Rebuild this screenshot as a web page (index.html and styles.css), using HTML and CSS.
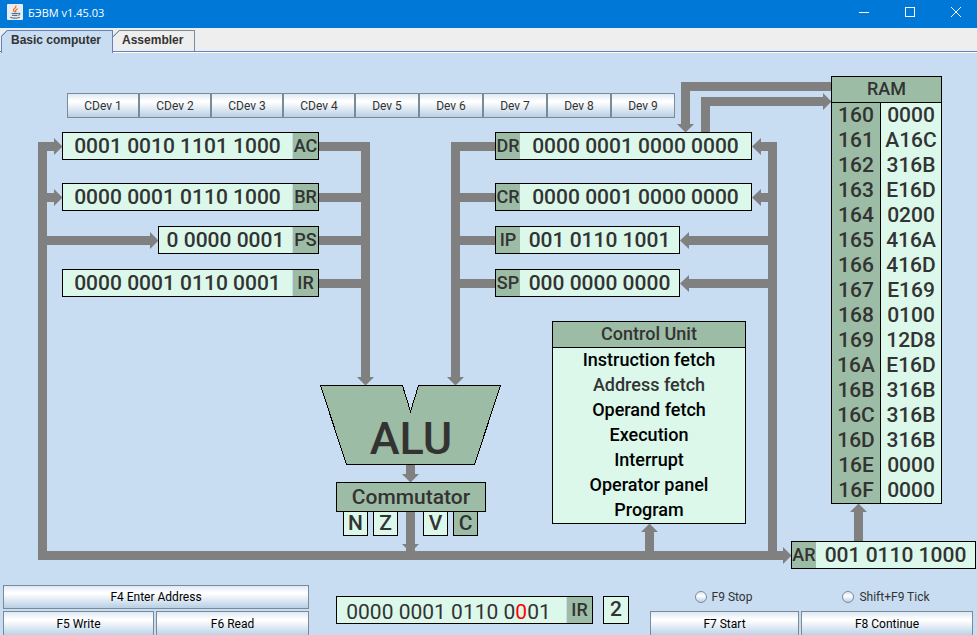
FILE: index.html
```html
<!DOCTYPE html>
<html lang="en">
<head>
<meta charset="utf-8">
<title>БЭВМ v1.45.03</title>
<link rel="stylesheet" href="styles.css">
</head>
<body>
<div class="window">
  <header class="titlebar">
    <svg class="app-icon" width="16" height="16" viewBox="0 0 16 16" aria-hidden="true">
      <rect width="16" height="16" rx="1" fill="#e9edf0"/>
      <path d="M8.2 8.3C5 6.4 6.800 5 8.300 3.800 9.200 3 9 2.200 8.800 1.500M9.300 8.500C7.600 6.900 8.700 6.100 10.600 4.800" fill="none" stroke="#e8762c" stroke-width="1.200"/>
      <path d="M4.500 9.500h6.800M5 11.400h5.500M11.300 9.300c2.200-.5 2 1.600-.2 2M3.200 13.200c2.500 1 7 1 9.600 0" fill="none" stroke="#4e7896" stroke-width="1.100"/>
    </svg>
    <span class="title">БЭВМ v1.45.03</span>
    <div class="window-controls">
      <button type="button" aria-label="Minimize"><svg width="10" height="10" viewBox="0 0 10 10"><path d="M0 5.500h10"/></svg></button>
      <button type="button" aria-label="Maximize"><svg width="10" height="10" viewBox="0 0 10 10"><rect x=".5" y=".5" width="9" height="9"/></svg></button>
      <button type="button" aria-label="Close"><svg width="10" height="10" viewBox="0 0 10 10"><path d="M0 0l10 10M10 0L0 10"/></svg></button>
    </div>
  </header>

  <nav class="tabs">
    <button type="button" class="tab selected">Basic computer</button>
    <button type="button" class="tab">Assembler</button>
  </nav>

  <main class="canvas">
    <svg class="wires" width="977" height="529" viewBox="0 53 977 529" aria-hidden="true">
      <g class="lines">
        <path d="M54 146.500H42.500V555.500H783M42.500 197.500H54M42.500 240.500H150"/>
        <path d="M319 146.500H365.500V377M319 197.500H365.500M319 240.500H365.500M319 283.500H365.500"/>
        <path d="M495 146.500H455.500V377M495 197.500H455.500M495 240.500H455.500M495 283.500H455.500"/>
        <path d="M761 146.500H772.500V555.500M761 197.500H772.500M689 240.500H772.500M689 283.500H772.500"/>
        <path d="M831 86.500H685.500V125M705.500 132V101.500H824"/>
        <path d="M410.500 464V475M410.500 511V551M649.500 551V531M858.500 541V511"/>
      </g>
      <g class="heads">
        <path d="M54 138v17l8.500-8.500zM54 189v17l8.500-8.500zM150 232v17l8.500-8.500zM783 547v17l8.500-8.500zM823 93v17l8.500-8.500z"/>
        <path d="M761 138v17l-9-8.500zM761 189v17l-9-8.500zM689 232v17l-9-8.500zM689 275v17l-9-8.500z"/>
        <path d="M357 377h17l-8.500 8.500zM447 377h17l-8.500 8.500zM677 124h17l-8.500 8.500zM402 474h17l-8.500 8.500zM402 544h17l-8.500 8.500z"/>
        <path d="M641 532h17l-8.500-8.500zM850 512h17l-8.500-8.500z"/>
      </g>
      <path class="alu-shape" shape-rendering="crispEdges" d="M320.500 385.500H402.500L410.500 411.500 418.500 385.500H500.500L474.500 464.500H346.500z"/>
      <text class="alu-text" x="411" y="454" text-anchor="middle">ALU</text>
    </svg>

    <div class="devices">
      <button type="button" class="control">CDev 1</button><button type="button" class="control">CDev 2</button><button type="button" class="control">CDev 3</button><button type="button" class="control">CDev 4</button><button type="button" class="control narrow">Dev 5</button><button type="button" class="control narrow">Dev 6</button><button type="button" class="control narrow">Dev 7</button><button type="button" class="control narrow">Dev 8</button><button type="button" class="control narrow">Dev 9</button>
    </div>

    <div class="register node ac"><span class="value">0001 0010 1101 1000</span><span class="name">AC</span></div>
    <div class="register node br"><span class="value">0000 0001 0110 1000</span><span class="name">BR</span></div>
    <div class="register short node ps"><span class="value">0 0000 0001</span><span class="name">PS</span></div>
    <div class="register node ir"><span class="value">0000 0001 0110 0001</span><span class="name">IR</span></div>

    <div class="register right node dr"><span class="name">DR</span><span class="value">0000 0001 0000 0000</span></div>
    <div class="register right node cr"><span class="name">CR</span><span class="value">0000 0001 0000 0000</span></div>
    <div class="register right medium node ip"><span class="name">IP</span><span class="value">001 0110 1001</span></div>
    <div class="register right medium node sp"><span class="name">SP</span><span class="value">000 0000 0000</span></div>
    <div class="register right medium node ar"><span class="name">AR</span><span class="value">001 0110 1000</span></div>

    <div class="commutator node">Commutator</div>
    <div class="flag node n">N</div>
    <div class="flag node z">Z</div>
    <div class="flag node v">V</div>
    <div class="flag set node c">C</div>

    <section class="control-unit node">
      <h2>Control Unit</h2>
      <ul>
        <li>Instruction fetch</li>
        <li class="current">Address fetch</li>
        <li>Operand fetch</li>
        <li>Execution</li>
        <li>Interrupt</li>
        <li>Operator panel</li>
        <li>Program</li>
      </ul>
    </section>

    <table class="ram node">
      <thead><tr><th colspan="2">RAM</th></tr></thead>
      <tbody>
        <tr><th>160</th><td>0000</td></tr>
        <tr><th>161</th><td>A16C</td></tr>
        <tr><th>162</th><td>316B</td></tr>
        <tr><th>163</th><td>E16D</td></tr>
        <tr><th>164</th><td>0200</td></tr>
        <tr><th>165</th><td>416A</td></tr>
        <tr><th>166</th><td>416D</td></tr>
        <tr><th>167</th><td>E169</td></tr>
        <tr><th>168</th><td>0100</td></tr>
        <tr><th>169</th><td>12D8</td></tr>
        <tr><th>16A</th><td>E16D</td></tr>
        <tr><th>16B</th><td>316B</td></tr>
        <tr><th>16C</th><td>316B</td></tr>
        <tr><th>16D</th><td>316B</td></tr>
        <tr><th>16E</th><td>0000</td></tr>
        <tr><th>16F</th><td>0000</td></tr>
      </tbody>
    </table>
  </main>

  <footer class="operator">
    <div class="entry">
      <button type="button" class="control wide">F4 Enter Address</button>
      <button type="button" class="control tall">F5 Write</button>
      <button type="button" class="control tall">F6 Read</button>
    </div>
    <div class="input-panel">
      <div class="register input"><span class="value">0000 0001 0110 0<span class="cursor">0</span>01</span><span class="name">IR</span></div>
      <div class="digit">2</div>
    </div>
    <div class="run">
      <label class="option"><input type="radio" name="stop">F9 Stop</label>
      <label class="option"><input type="radio" name="tick">Shift+F9 Tick</label>
      <button type="button" class="control tall">F7 Start</button>
      <button type="button" class="control tall">F8 Continue</button>
    </div>
  </footer>
</div>
</body>
</html>
```
FILE: styles.css
```css
:root {
  --page: #c8ddf2;
  --green: #9dbca5;
  --mint: #dbf8eb;
  --text: #333;
  --edge: #7a8a99;
  --accent: #6382bf;
}

* { box-sizing: border-box; }

body {
  margin: 0;
  overflow: hidden;
  background: var(--page);
  color: var(--text);
  font-family: Roboto, sans-serif;
}

button { font: inherit; color: inherit; margin: 0; padding: 0; }

.window { min-height: 100vh; }

.titlebar {
  display: flex;
  align-items: center;
  height: 28px;
  padding: 0 16px 4px 7px;
  background: #0078d7;
  color: #fff;
  font: 11px/16px "Open Sans", sans-serif;
}

.title { margin-left: 5px; padding-top: 1px; }

.window-controls { display: flex; gap: 36px; margin-left: auto; }

.window-controls button {
  display: flex;
  border: 0;
  background: none;
}

.window-controls svg { fill: none; stroke: #fff; overflow: visible; }

.tabs {
  display: flex;
  height: 25px;
  padding: 2px 1px 0;
  background: linear-gradient(#eee 23px, var(--accent) 23px, var(--accent) 24px, #fff 24px);
}

.tab {
  height: 22px;
  padding: 0 11px 3px 9px;
  border: 1px solid var(--edge);
  border-left: 0;
  background: linear-gradient(135deg, #eee 4px, var(--edge) 4px, var(--edge) 5px, #eee 5px) border-box;
  border-bottom-color: var(--accent);
  font: bold 12px/18px "Liberation Sans", sans-serif;
  clip-path: polygon(6px 0, 100% 0, 100% 100%, 0 100%, 0 6px);
}

.tab.selected {
  height: 23px;
  padding-bottom: 4px;
  border: 1px solid var(--accent);
  border-bottom: 0;
  background: linear-gradient(135deg, #eee 4px, var(--accent) 4px, var(--accent) 5px, var(--page) 5px) border-box;
}

.canvas {
  position: relative;
  height: 529px;
}

.wires { position: absolute; top: 0; left: 0; }
.lines { fill: none; stroke: #808080; stroke-width: 9; }
.heads { fill: #808080; }
.alu-shape { fill: var(--green); stroke: #000; }
.alu-text { fill: var(--text); font-size: 45px; font-weight: 500; }

.devices {
  position: relative;
  display: flex;
  padding: 40px 0 0 67px;
}

.control {
  height: 24px;
  border: 1px solid var(--edge);
  background: linear-gradient(#dde8f3, #fff 30%, #fff 35%, #b8cfe5);
  color: #000;
  font-size: 12px;
  line-height: 14px;
}

.control.tall { height: 26px; }
.devices .control { width: 72px; height: 25px; color: var(--text); }
.devices .control.narrow { width: 64px; }

.node { position: absolute; }

.register {
  display: flex;
  width: 257px;
  height: 28px;
  border: 1px solid #000;
  background: var(--mint);
  font-weight: 500;
  line-height: 26px;
  white-space: nowrap;
}

.register.medium { width: 185px; }
.register.short { width: 161px; }

.register .value { flex: 1; font-size: 21px; text-align: center; }

.register .name {
  width: 26px;
  border-left: 1px solid var(--page);
  background: var(--green);
  font-size: 18px;
  text-align: center;
}

.register.right .name { width: 24px; border-left: 0; }

.ac { left: 62px; top: 79px; }
.br { left: 62px; top: 130px; }
.ps { left: 158px; top: 173px; }
.ir { left: 62px; top: 216px; }
.dr { left: 495px; top: 79px; }
.cr { left: 495px; top: 130px; }
.ip { left: 495px; top: 173px; }
.sp { left: 495px; top: 216px; }
.ar { left: 791px; top: 488px; }

.commutator {
  left: 336px;
  top: 429px;
  width: 150px;
  height: 30px;
  border: 1px solid #000;
  background: var(--green);
  font-size: 21px;
  font-weight: 500;
  line-height: 28px;
  text-align: center;
}

.flag {
  top: 458px;
  width: 25px;
  height: 25px;
  border: 1px solid #000;
  background: var(--mint);
  font-size: 21px;
  font-weight: 500;
  line-height: 23px;
  text-align: center;
}

.flag.set { background: var(--green); }
.n { left: 343px; }
.z { left: 373px; }
.v { left: 423px; }
.c { left: 453px; }

.control-unit {
  left: 552px;
  top: 268px;
  width: 194px;
  border: 1px solid #000;
  background: var(--mint);
  font-size: 18px;
  font-weight: 500;
  line-height: 23px;
  text-align: center;
}

.control-unit h2 {
  margin: 0;
  padding-bottom: 2px;
  border-bottom: 1px solid #000;
  background: var(--green);
  font: inherit;
}

.control-unit ul { margin: 0; padding: 0; list-style: none; color: #000; }
.control-unit li { padding-bottom: 2px; }
.control-unit .current { color: var(--text); }

.ram {
  left: 831px;
  top: 23px;
  width: 111px;
  border: 1px solid #000;
  border-spacing: 0;
  background: var(--mint);
  font-size: 21px;
  line-height: 25px;
  text-align: center;
}

.ram th, .ram td { height: 25px; padding: 0; font-weight: 500; }
.ram th { background: var(--green); }
.ram thead th {
  height: 26px;
  padding-bottom: 2px;
  border-bottom: 1px solid #000;
  font-size: 18px;
  line-height: 23px;
}
.ram tbody th { width: 49px; border-right: 1px solid #000; }

.operator {
  display: grid;
  grid-template-columns: 306fr 299fr 323fr;
  column-gap: 21px;
  padding: 3px 4px 0 3px;
}

.entry {
  display: grid;
  grid-template-columns: 151fr 153fr;
  gap: 2px;
}

.entry .wide { grid-column: 1 / -1; }

.input-panel {
  display: flex;
  align-items: flex-start;
  gap: 10px;
  padding: 11px 0 0 6px;
}

.register.input .value { padding: 2px 6px 0 0; font-weight: 400; }
.cursor { color: #f00; }

.digit {
  width: 26px;
  height: 28px;
  border: 1px solid #000;
  background: var(--mint);
  font-size: 21px;
  font-weight: 500;
  line-height: 25px;
  text-align: center;
}

.run {
  display: grid;
  grid-template-columns: 149fr 172fr;
  grid-template-rows: 24px auto;
  gap: 2px;
}

.option {
  display: flex;
  align-items: center;
  justify-content: center;
  gap: 5px;
  padding-right: 2px;
  font-size: 12px;
  line-height: 14px;
}

.option input {
  appearance: none;
  width: 12px;
  height: 12px;
  margin: 0;
  border: 1px solid var(--edge);
  border-radius: 50%;
  background: linear-gradient(#dde8f3, #fff 40%, #b8cfe5);
}
```
